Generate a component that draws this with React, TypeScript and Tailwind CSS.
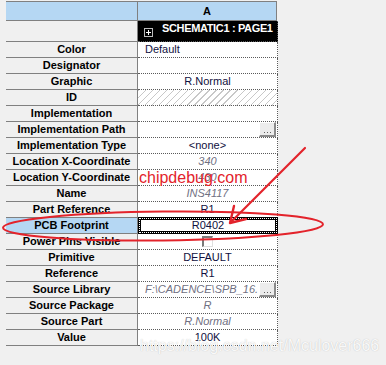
import React from "react";

type Row = {
  label: string;
  value?: string;
  left?: boolean;
  dim?: boolean;
  hatch?: boolean;
  button?: boolean;
  checkbox?: boolean;
  selected?: boolean;
};

const rows: Row[] = [
  { label: "Color", value: "Default", left: true },
  { label: "Designator" },
  { label: "Graphic", value: "R.Normal" },
  { label: "ID", hatch: true },
  { label: "Implementation" },
  { label: "Implementation Path", button: true },
  { label: "Implementation Type", value: "<none>" },
  { label: "Location X-Coordinate", value: "340", dim: true },
  { label: "Location Y-Coordinate", value: "430", dim: true },
  { label: "Name", value: "INS4117", dim: true },
  { label: "Part Reference", value: "R1" },
  { label: "PCB Footprint", value: "R0402", selected: true },
  { label: "Power Pins Visible", checkbox: true },
  { label: "Primitive", value: "DEFAULT" },
  { label: "Reference", value: "R1" },
  { label: "Source Library", value: "F:\\CADENCE\\SPB_16.", dim: true, left: true, button: true },
  { label: "Source Package", value: "R", dim: true },
  { label: "Source Part", value: "R.Normal", dim: true },
  { label: "Value", value: "100K" },
];

function DotsButton() {
  return (
    <div className="ml-auto mr-[1px] w-[17px] h-[15px] shrink-0 bg-[#ececec] border-t border-l border-white border-b-2 border-r-2 border-b-[#8a8a8a] border-r-[#8a8a8a] flex items-end justify-center pb-[2px] gap-[2px]">
      <div className="w-[1px] h-[1px] bg-[#606060]" />
      <div className="w-[1px] h-[1px] bg-[#606060]" />
      <div className="w-[1px] h-[1px] bg-[#606060]" />
    </div>
  );
}

function ValueCell({ row }: { row: Row }) {
  if (row.hatch) {
    return (
      <div className="w-[140px] h-[16px] border-b border-r border-dotted border-[#5a5a5a] bg-white bg-[repeating-linear-gradient(135deg,#c8c8c8_0px,#c8c8c8_1px,transparent_1px,transparent_5px)]" />
    );
  }
  if (row.selected) {
    return (
      <div className="relative w-[140px] h-[16px] border-b border-r border-dotted border-[#5a5a5a] bg-white">
        <div className="absolute top-[-1px] left-0 right-[-1px] bottom-[-1px] border border-black bg-black">
          <div className="w-full h-full border border-dotted border-white">
            <div className="w-full h-full border border-black bg-white flex items-center justify-center text-[11px] text-[#101040] leading-none">
              {row.value}
            </div>
          </div>
        </div>
      </div>
    );
  }
  return (
    <div
      className={
        "w-[140px] h-[16px] border-b border-r border-dotted border-[#5a5a5a] bg-white flex items-center overflow-hidden text-[11px] leading-none whitespace-nowrap " +
        (row.left ? "justify-start pl-[7px] " : "justify-center ") +
        (row.dim ? "italic text-[#707082]" : "text-[#101040]")
      }
    >
      {row.value && <span className={row.button ? "flex-1 overflow-hidden" : ""}>{row.value}</span>}
      {row.checkbox && (
        <div className="w-[11px] h-[11px] bg-white border-t-2 border-l-2 border-[#7a7a7a] border-b border-r border-b-[#e0e0e0] border-r-[#e0e0e0]" />
      )}
      {row.button && <DotsButton />}
    </div>
  );
}

export default function App() {
  return (
    <div className="relative w-[386px] h-[365px] bg-[#f0f0f0] overflow-hidden font-['Liberation_Sans',Arial,sans-serif]">
      <div className="pt-[1px] pl-[6px]">
        {/* header */}
        <div className="flex h-[20px] border-t border-b border-[#808080] bg-[#b5d7f3] w-[271px]">
          <div className="w-[132px] border-r border-[#808080]" />
          <div className="w-[139px] border-r border-[#808080] flex items-center justify-center text-[11px] font-bold text-black">A</div>
        </div>

        {/* schematic row */}
        <div className="flex h-[21px]">
          <div className="w-[132px] border-b border-r border-[#808080] bg-[#f0f0f0]" />
          <div className="w-[140px] border-b border-r border-dotted border-[#5a5a5a] bg-black flex items-start overflow-hidden whitespace-nowrap">
            <div className="mt-[7px] ml-[6px] w-[9px] h-[9px] border border-[#bdbdbd] relative shrink-0">
              <div className="absolute left-[1px] top-[3px] w-[5px] h-[1px] bg-white" />
              <div className="absolute left-[3px] top-[1px] w-[1px] h-[5px] bg-white" />
            </div>
            <span className="ml-[9px] mt-[1px] text-[11px] leading-[13px] font-bold text-white tracking-[-0.35px]">SCHEMATIC1 : PAGE1</span>
          </div>
        </div>

        {rows.map((row) => (
          <div key={row.label} className="flex">
            <div
              className={
                "w-[132px] h-[16px] border-b border-r border-[#808080] flex items-center justify-center text-[11px] font-bold text-black leading-none whitespace-nowrap " +
                (row.selected ? "bg-[#b5d7f3]" : "bg-[#f0f0f0]")
              }
            >
              {row.label}
            </div>
            <ValueCell row={row} />
          </div>
        ))}
      </div>

      {/* annotations */}
      <svg className="absolute inset-0 pointer-events-none" width="386" height="365" viewBox="0 0 386 365">
        <ellipse cx="163" cy="226" rx="160" ry="14.5" fill="none" stroke="#e3232b" strokeWidth="2" transform="rotate(-0.6 163 226)" />
        <line x1="305" y1="148" x2="232" y2="221" stroke="#e3232b" strokeWidth="2.2" strokeLinecap="round" />
        <polyline points="234,206 230,223 246,219" fill="none" stroke="#e3232b" strokeWidth="2.4" strokeLinejoin="round" strokeLinecap="round" />
      </svg>
      <div className="absolute left-[139px] top-[168px] text-[16px] leading-[20px] text-[#e3232b] pointer-events-none">chipdebug.com</div>
      <div className="absolute left-[140px] top-[336px] text-[16px] leading-[20px] text-white/90 [text-shadow:0_0_1px_rgba(0,0,0,0.25)] pointer-events-none whitespace-nowrap">
        https://blog.csdn.net/Mculover666
      </div>
    </div>
  );
}
